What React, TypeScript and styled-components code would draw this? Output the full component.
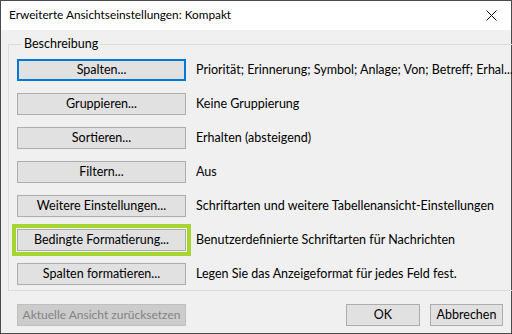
import React from 'react'
import styled, { createGlobalStyle } from 'styled-components'

const uiFont = "Lato, 'Liberation Sans', sans-serif"

const GlobalStyle = createGlobalStyle`
  html, body {
    margin: 0;
    padding: 0;
    background: #ffffff;
  }
  body {
    font-family: ${uiFont};
    font-size: 12px;
    color: #000000;
  }
`

const Window = styled.div`
  width: 512px;
  height: 334px;
  box-sizing: border-box;
  border: 1px solid #4a4a4a;
  display: flex;
  flex-direction: column;
  background: #f0f0f0;
`

const TitleBar = styled.div`
  height: 29px;
  flex-shrink: 0;
  background: #ffffff;
  display: flex;
  align-items: center;
  justify-content: space-between;
  padding: 0 10px 0 8px;
`

const Title = styled.span`
  font-size: 11.8px;
  line-height: 16px;
  padding-bottom: 1px;
`

const CloseButton = styled.button`
  border: none;
  background: none;
  padding: 0;
  width: 20px;
  height: 20px;
  display: flex;
  align-items: center;
  justify-content: center;
  color: #111111;
`

const Body = styled.div`
  flex: 1;
  display: flex;
  flex-direction: column;
  padding: 6px 7px 0 7px;
`

const GroupBox = styled.fieldset`
  margin: 0;
  border: 1px solid #dcdcdc;
  padding: 7px 8px 0 8px;
  height: 255px;
  box-sizing: border-box;
  display: flex;
  flex-direction: column;
  gap: 12px;
`

const Legend = styled.legend`
  padding: 0 2px;
  margin-left: 5px;
  font-size: 12.5px;
  line-height: 16px;
`

const Row = styled.div`
  display: flex;
  align-items: center;
  gap: 10px;
  height: 22px;
`

const Button = styled.button<{ $focused?: boolean; $disabled?: boolean; $width?: number }>`
  width: ${({ $width }) => $width ?? 169}px;
  height: 22px;
  box-sizing: border-box;
  flex-shrink: 0;
  font-family: ${uiFont};
  font-size: ${({ $disabled }) => ($disabled ? 12 : 12.5)}px;
  line-height: 16px;
  padding: 0;
  text-align: center;
  background: ${({ $disabled }) => ($disabled ? '#cccccc' : '#e1e1e1')};
  color: ${({ $disabled }) => ($disabled ? '#838383' : '#000000')};
  border: ${({ $focused, $disabled }) =>
    $focused ? '2px solid #0078d7' : $disabled ? '1px solid #bfbfbf' : '1px solid #adadad'};
  white-space: nowrap;
`

const Highlight = styled.div`
  display: flex;
  outline: 4px solid #a6d52f;
  outline-offset: 1px;
`

const Description = styled.span`
  white-space: nowrap;
  font-size: 12.5px;
  line-height: 16px;
`

const Footer = styled.div`
  display: flex;
  align-items: center;
  padding: 13px 1px 0 9px;
`

const Spacer = styled.div`
  flex: 1;
`

const FooterButtons = styled.div`
  display: flex;
  gap: 10px;
`

const rows = [
  { label: 'Spalten...', text: 'Priorität; Erinnerung; Symbol; Anlage; Von; Betreff; Erhal...', focused: true },
  { label: 'Gruppieren...', text: 'Keine Gruppierung' },
  { label: 'Sortieren...', text: 'Erhalten (absteigend)' },
  { label: 'Filtern...', text: 'Aus' },
  { label: 'Weitere Einstellungen...', text: 'Schriftarten und weitere Tabellenansicht-Einstellungen' },
  { label: 'Bedingte Formatierung...', text: 'Benutzerdefinierte Schriftarten für Nachrichten', highlighted: true },
  { label: 'Spalten formatieren...', text: 'Legen Sie das Anzeigeformat für jedes Feld fest.' },
]

export default function App() {
  return (
    <>
      <GlobalStyle />
      <Window>
        <TitleBar>
          <Title>Erweiterte Ansichtseinstellungen: Kompakt</Title>
          <CloseButton aria-label="Schließen">
            <svg width="11" height="11" viewBox="0 0 11 11">
              <path d="M0.5 0.5 L10.5 10.5 M10.5 0.5 L0.5 10.5" stroke="currentColor" strokeWidth="1" />
            </svg>
          </CloseButton>
        </TitleBar>
        <Body>
          <GroupBox>
            <Legend>Beschreibung</Legend>
            {rows.map(row => (
              <Row key={row.label}>
                {row.highlighted ? (
                  <Highlight>
                    <Button>{row.label}</Button>
                  </Highlight>
                ) : (
                  <Button $focused={row.focused}>{row.label}</Button>
                )}
                <Description>{row.text}</Description>
              </Row>
            ))}
          </GroupBox>
          <Footer>
            <Button $disabled>Aktuelle Ansicht zurücksetzen</Button>
            <Spacer />
            <FooterButtons>
              <Button $width={74}>OK</Button>
              <Button $width={73}>Abbrechen</Button>
            </FooterButtons>
          </Footer>
        </Body>
      </Window>
    </>
  )
}
